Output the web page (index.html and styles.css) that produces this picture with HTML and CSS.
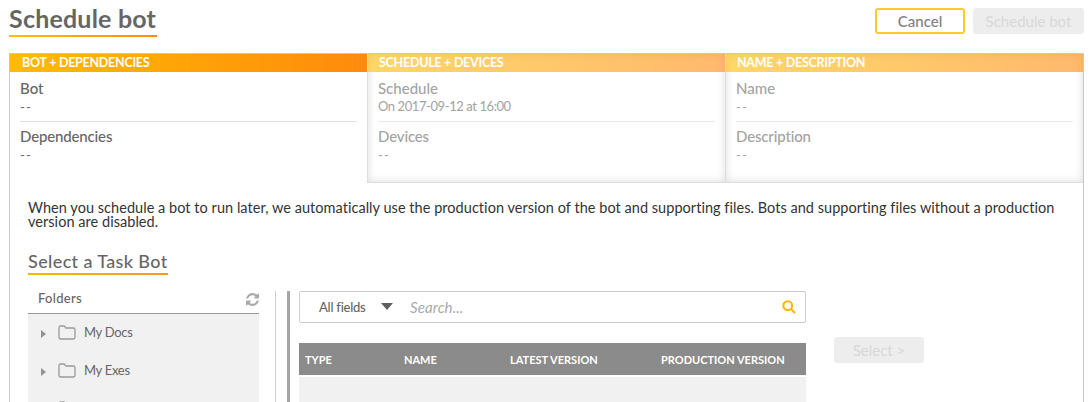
FILE: index.html
```html
<!DOCTYPE html>
<html lang="en">
<head>
<meta charset="utf-8">
<title>Schedule bot</title>
<link rel="stylesheet" href="styles.css">
</head>
<body>
<header class="page-head">
  <h1 class="title">Schedule bot</h1>
  <div class="actions">
    <button class="btn btn-cancel">Cancel</button>
    <button class="btn btn-disabled btn-schedule">Schedule bot</button>
  </div>
</header>
<main class="panel">
  <div class="tabs">
    <section class="tab tab-active">
      <h2 class="tab-title">BOT + DEPENDENCIES</h2>
      <div class="field"><div class="label">Bot</div><div class="value dashes">--</div></div>
      <div class="field"><div class="label tight">Dependencies</div><div class="value dashes">--</div></div>
    </section>
    <section class="tab tab-idle">
      <h2 class="tab-title">SCHEDULE + DEVICES</h2>
      <div class="field"><div class="label">Schedule</div><div class="value date">On 2017-09-12 at 16:00</div></div>
      <div class="field"><div class="label tight">Devices</div><div class="value dashes">--</div></div>
    </section>
    <section class="tab tab-idle">
      <h2 class="tab-title">NAME + DESCRIPTION</h2>
      <div class="field"><div class="label">Name</div><div class="value dashes">--</div></div>
      <div class="field"><div class="label tight">Description</div><div class="value dashes">--</div></div>
    </section>
  </div>
  <div class="content">
    <p class="intro">When you schedule a bot to run later, we automatically use the production version of the bot and supporting files. Bots and supporting files without a production<br>version are disabled.</p>
    <h2 class="subtitle">Select a Task Bot</h2>
    <div class="picker">
      <div class="folders">
        <div class="folders-head">
          <span>Folders</span>
          <svg class="refresh" viewBox="0 0 1536 1536"><path fill="#aaa" d="M1511 928q0 5-1 7-64 268-268 434.500T764 1536q-146 0-282.500-55T238 1324l-129 129q-19 19-45 19t-45-19-19-45V960q0-26 19-45t45-19h448q26 0 45 19t19 45-19 45l-137 137q71 66 161 102t187 36q134 0 250-65t186-179q11-17 53-117 8-23 30-23h192q13 0 22.500 9.500t9.500 22.500zm25-800v448q0 26-19 45t-45 19h-448q-26 0-45-19t-19-45 19-45l138-138Q969 256 768 256q-134 0-250 65T332 500q-11 17-53 117-8 23-30 23H50q-13 0-22.500-9.500T18 608v-7q65-268 270-434.500T768 0q146 0 284 55.500T1297 212l130-129q19-19 45-19t45 19 19 45z"/></svg>
        </div>
        <ul class="tree">
          <li class="node"><i class="caret"></i><svg class="folder" viewBox="0 0 18 15"><path d="M1 2.600Q1 1 2.600 1H5.800Q7.200 1 7.200 2.300 7.200 3 8.200 3H15.300Q17 3 17 4.700V12.300Q17 14 15.300 14H2.700Q1 14 1 12.300Z"/></svg><span>My Docs</span></li>
          <li class="node"><i class="caret"></i><svg class="folder" viewBox="0 0 18 15"><path d="M1 2.600Q1 1 2.600 1H5.800Q7.200 1 7.200 2.300 7.200 3 8.200 3H15.300Q17 3 17 4.700V12.300Q17 14 15.300 14H2.700Q1 14 1 12.300Z"/></svg><span>My Exes</span></li>
          <li class="node-cut"><svg class="folder" viewBox="0 0 18 15"><path d="M1 2.600Q1 1 2.600 1H5.800Q7.200 1 7.200 2.300 7.200 3 8.200 3H15.300Q17 3 17 4.700V12.300Q17 14 15.300 14H2.700Q1 14 1 12.300Z"/></svg></li>
        </ul>
      </div>
      <div class="rule-thin"></div>
      <div class="rule-thick"></div>
      <div class="files">
        <div class="search">
          <span>All fields</span>
          <svg class="drop" viewBox="0 0 12 7"><path d="M0 0h12L6 7z"/></svg>
          <span class="placeholder">Search...</span>
          <svg class="glass" viewBox="0 0 14 14"><circle cx="5.700" cy="5.700" r="4.400"/><path d="M9 9l3.500 3.500"/></svg>
        </div>
        <div class="thead">
          <span>TYPE</span><span>NAME</span><span>LATEST VERSION</span><span>PRODUCTION VERSION</span>
        </div>
        <div class="tbody"></div>
      </div>
      <button class="btn btn-disabled btn-select">Select &gt;</button>
    </div>
  </div>
</main>
</body>
</html>
```
FILE: styles.css
```css
* { box-sizing: border-box; }
body {
  height: 402px;
  margin: 0;
  padding: 0 8px 0 9px;
  display: flex;
  flex-direction: column;
  background: #fff;
  color: #666;
  font-family: Lato, "Open Sans", sans-serif;
}
h1, h2, p, ul { margin: 0; padding: 0; font-weight: inherit; }
span, p { white-space: nowrap; }

.page-head { height: 53px; flex: none; display: flex; justify-content: space-between; align-items: flex-start; }
.title {
  width: 148px;
  height: 37px;
  padding-top: 3px;
  font-size: 25px;
  line-height: 30px;
  font-weight: 700;
  letter-spacing: .2px;
  white-space: nowrap;
  background: linear-gradient(90deg, #ffbc03, #ff8c0f) bottom / 100% 2px no-repeat;
}
.actions { display: flex; gap: 8px; padding-top: 8px; }
.btn {
  height: 26px;
  padding: 0 0 1px;
  border: 0;
  border-radius: 3px;
  font: 15px/24px Lato, "Open Sans", sans-serif;
}
.btn-cancel { width: 90px; border: 2px solid #ffcb2b; background: #fff; color: #808080; line-height: 20px; font-weight: 500; }
.btn-disabled { background: #ededed; color: #d8d8d8; }
.btn-schedule { width: 111px; }

.panel {
  flex: 1;
  min-height: 0;
  display: flex;
  flex-direction: column;
  border: 1px solid #c8c8c8;
  border-bottom: 0;
}
.tabs { flex: none; display: grid; grid-template-columns: 357px 358px 358px; height: 129px; }
.tab { padding: 0 10px; }
.tab-idle {
  border-left: 1px solid #ddd;
  border-bottom: 1px solid #ddd;
  box-shadow: inset 0 0 8px rgba(0, 0, 0, .14);
  color: #a3a3a3;
}
.tab-title {
  height: 18px;
  margin: 0 -10px;
  padding-left: 12px;
  color: #fff;
  font-size: 12.500px;
  line-height: 18px;
  font-weight: 700;
  letter-spacing: -.26px;
  background: linear-gradient(90deg, #ffbc03, #ff8a0c);
}
.tab-idle .tab-title { padding-left: 11px; background: linear-gradient(90deg, rgba(255, 188, 3, .6), rgba(255, 138, 12, .6)); }
.field { height: 48px; padding-top: 6px; }
.field:nth-child(2) { height: 50px; padding-top: 8px; border-bottom: 1px solid #e0e0e0; }
.tab-idle .field:nth-child(2) { border-color: #e9e9e9; }
.label { height: 18px; font-size: 15px; line-height: 17px; font-weight: 500; }
.tight { letter-spacing: -.15px; }
.value { height: 18px; font-size: 13px; line-height: 17px; }
.date { letter-spacing: -.42px; }
.dashes { line-height: 19px; letter-spacing: 1.1px; }

.content { flex: 1; min-height: 0; display: flex; flex-direction: column; padding: 18px 0 0 18px; }
.intro { flex: none; height: 28px; font-size: 14.500px; line-height: 14px; letter-spacing: .04px; color: #333; }
.subtitle {
  flex: none;
  width: 140px;
  height: 26px;
  margin-top: 20px;
  font-size: 18px;
  line-height: 25px;
  font-weight: 500;
  letter-spacing: .38px;
  white-space: nowrap;
  background: linear-gradient(90deg, #ffb400, #ff9233) bottom / 100% 2px no-repeat;
}
.picker { flex: 1; min-height: 0; display: flex; align-items: stretch; margin-top: 16px; }
.folders { width: 231px; display: flex; flex-direction: column; }
.folders-head {
  flex: none;
  height: 23px;
  padding: 0 0 7px 10px;
  display: flex;
  justify-content: space-between;
  align-items: center;
  border-bottom: 1px solid #999;
  font-size: 13px;
  line-height: 15px;
  font-weight: 500;
  letter-spacing: .3px;
}
.refresh { width: 13px; height: 13px; margin-top: 1px; }
.tree { flex: 1; min-height: 0; background: #f1f1f1; list-style: none; }
.node { display: flex; align-items: center; height: 38px; padding-left: 13px; font-size: 13px; letter-spacing: -.3px; }
.node span { padding-bottom: 2px; }
.node-cut { height: 12px; padding: 11px 0 0 30px; overflow: hidden; }
.node-cut .folder { display: block; margin: 0; }
.caret { height: 8px; margin-top: 2px; border: 4px solid transparent; border-left: 5px solid #929292; border-right: 0; }
.folder { width: 18px; height: 15px; margin: 0 8px 1px 12px; fill: none; stroke: #999; stroke-width: 1.300; }
.rule-thin { width: 1px; margin-left: 16px; background: #ccc; }
.rule-thick { width: 3px; margin-left: 11px; background: #a6a6a6; }
.files { width: 507px; margin-left: 9px; display: flex; flex-direction: column; }
.search {
  height: 32px;
  padding: 0 9px 1px 19px;
  display: grid;
  grid-template-columns: 62px 29px 1fr 14px;
  align-items: center;
  border: 1px solid #ccc;
  border-radius: 2px;
  font-size: 13px;
  line-height: 18px;
  font-weight: 500;
  letter-spacing: -.25px;
}
.drop { width: 12px; height: 7px; fill: #606060; }
.placeholder { color: #aaa; font-size: 15px; font-weight: 400; font-style: italic; letter-spacing: .1px; }
.glass { width: 14px; height: 14px; margin-top: 1px; fill: none; stroke: #ffb50a; stroke-width: 2.100; stroke-linecap: round; }
.thead {
  height: 32px;
  margin: 20px 0 2px;
  padding-left: 6px;
  display: grid;
  grid-template-columns: 99px 106px 151px 1fr;
  align-items: center;
  background: #8b8b8b;
  color: #fff;
  font-size: 11px;
  line-height: 34px;
  font-weight: 700;
}
.tbody { flex: 1; background: #f1f1f1; }
.btn-select { width: 90px; margin: 46px 0 0 28px; }
```
